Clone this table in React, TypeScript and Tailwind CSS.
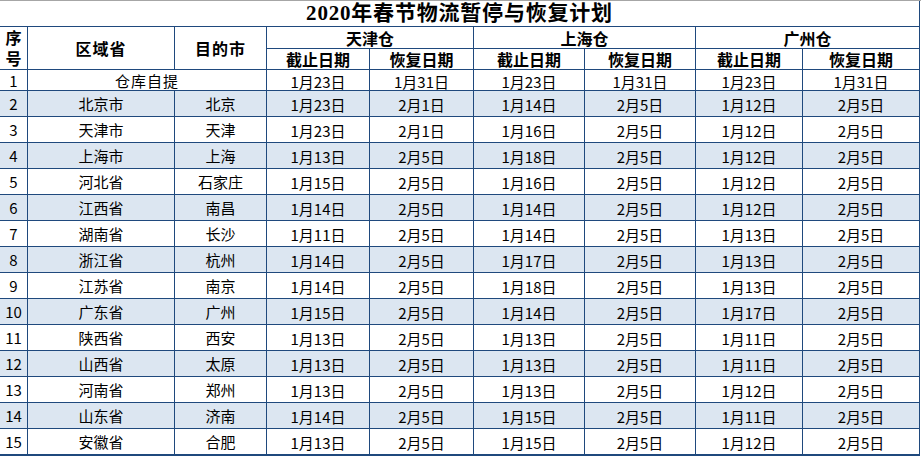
import React from "react";

type Row = [string, string, string, string, string, string, string, string, string];

const rows: Row[] = [
  ["1", "仓库自提", "", "1月23日", "1月31日", "1月23日", "1月31日", "1月23日", "1月31日"],
  ["2", "北京市", "北京", "1月23日", "2月1日", "1月14日", "2月5日", "1月12日", "2月5日"],
  ["3", "天津市", "天津", "1月23日", "2月1日", "1月16日", "2月5日", "1月12日", "2月5日"],
  ["4", "上海市", "上海", "1月13日", "2月5日", "1月18日", "2月5日", "1月12日", "2月5日"],
  ["5", "河北省", "石家庄", "1月15日", "2月5日", "1月16日", "2月5日", "1月12日", "2月5日"],
  ["6", "江西省", "南昌", "1月14日", "2月5日", "1月14日", "2月5日", "1月12日", "2月5日"],
  ["7", "湖南省", "长沙", "1月11日", "2月5日", "1月14日", "2月5日", "1月13日", "2月5日"],
  ["8", "浙江省", "杭州", "1月14日", "2月5日", "1月17日", "2月5日", "1月13日", "2月5日"],
  ["9", "江苏省", "南京", "1月14日", "2月5日", "1月18日", "2月5日", "1月13日", "2月5日"],
  ["10", "广东省", "广州", "1月15日", "2月5日", "1月14日", "2月5日", "1月17日", "2月5日"],
  ["11", "陕西省", "西安", "1月13日", "2月5日", "1月13日", "2月5日", "1月11日", "2月5日"],
  ["12", "山西省", "太原", "1月13日", "2月5日", "1月13日", "2月5日", "1月11日", "2月5日"],
  ["13", "河南省", "郑州", "1月13日", "2月5日", "1月13日", "2月5日", "1月12日", "2月5日"],
  ["14", "山东省", "济南", "1月14日", "2月5日", "1月15日", "2月5日", "1月11日", "2月5日"],
  ["15", "安徽省", "合肥", "1月13日", "2月5日", "1月15日", "2月5日", "1月12日", "2月5日"],
];

const cjk = "font-['Noto_Sans_CJK_SC','Noto_Sans',sans-serif]";

function Cell({
  children,
  className = "",
}: {
  children?: React.ReactNode;
  className?: string;
}) {
  return (
    <div className={`flex items-center justify-center whitespace-nowrap text-black ${className}`}>
      {children}
    </div>
  );
}

export default function App() {
  return (
    <div className={`w-[921px] h-[456px] overflow-hidden bg-white ${cjk}`}>
      <div className="h-px w-full bg-[#a6a6a6]" />
      <div className="grid w-[920px] grid-cols-[27px_146px_91px_102px_103px_110px_110px_106px_116px] grid-rows-[25px_21px_20px_20px_repeat(15,25px)] gap-px bg-[#1f497d] pr-px pb-px">
        <Cell className="col-span-9 bg-white text-[21px] leading-none font-bold font-['Liberation_Serif','Noto_Sans_CJK_SC',serif] tracking-[0.8px]">
          2020年春节物流暂停与恢复计划
        </Cell>
        <div className="row-span-2 flex flex-col items-center justify-center bg-white text-[16px] font-bold leading-[21px] text-black">
          <span>序</span>
          <span>号</span>
        </div>
        <Cell className="row-span-2 bg-white text-[16px] leading-none font-bold tracking-[1px]">区域省</Cell>
        <Cell className="row-span-2 bg-white text-[16px] leading-none font-bold tracking-[1px]">目的市</Cell>
        <Cell className="col-span-2 bg-white text-[16px] leading-none font-bold">天津仓</Cell>
        <Cell className="col-span-2 bg-white text-[16px] leading-none font-bold">上海仓</Cell>
        <Cell className="col-span-2 bg-white text-[16px] leading-none font-bold">广州仓</Cell>
        {["截止日期", "恢复日期", "截止日期", "恢复日期", "截止日期", "恢复日期"].map((t, i) => (
          <Cell key={i} className="bg-white text-[16px] leading-none font-bold">
            {t}
          </Cell>
        ))}
        {rows.map((r, ri) => {
          const bg = ri % 2 === 1 ? "bg-[#dce6f1]" : "bg-white";
          const merged = r[2] === "";
          return (
            <React.Fragment key={ri}>
              <Cell className={`${bg} text-[15px] leading-none`}>{r[0]}</Cell>
              {merged ? (
                <Cell className={`${bg} col-span-2 text-[15px] leading-none tracking-[1px]`}>{r[1]}</Cell>
              ) : (
                <>
                  <Cell className={`${bg} text-[15px] leading-none`}>{r[1]}</Cell>
                  <Cell className={`${bg} text-[15px] leading-none`}>{r[2]}</Cell>
                </>
              )}
              {r.slice(3).map((v, ci) => (
                <Cell key={ci} className={`${bg} text-[15px] leading-none pt-[2px]`}>
                  {v}
                </Cell>
              ))}
            </React.Fragment>
          );
        })}
      </div>
    </div>
  );
}
